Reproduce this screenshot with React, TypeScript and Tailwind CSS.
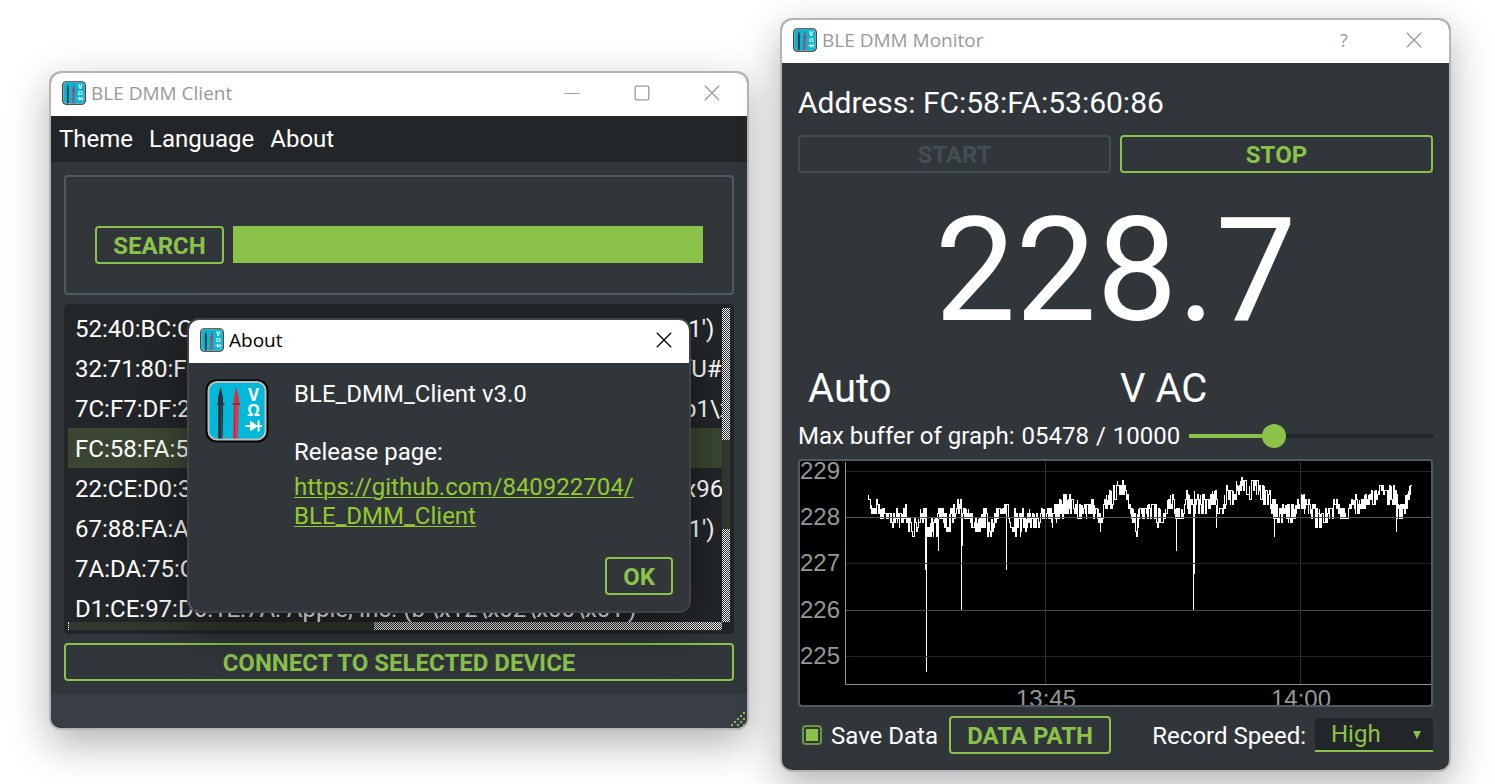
import { useState, type ReactNode } from "react";

const SANS = "font-['Roboto',sans-serif]";
const TITLE_FONT = "font-['Open_Sans',sans-serif]";

function AppIcon({ className }: { className: string }) {
  return (
    <svg viewBox="0 0 64 64" className={className} aria-hidden="true">
      <rect x="0.5" y="0.5" width="63" height="63" rx="11" fill="#050505" />
      <rect x="3.5" y="3" width="57" height="57.5" rx="8.5" fill="#00b8d9" stroke="#bfbdb9" strokeWidth="2" />
      <path d="M15 9 L16 9 L18 19 V24 H13 V19 Z" fill="#2b2f38" />
      <path d="M12 24 H19.4 V25.6 H18.2 L17.6 59.5 H13.2 L13.2 25.6 H12 Z" fill="#2b2f38" />
      <path d="M16.4 27 V59" stroke="#4b505a" strokeWidth="0.8" />
      <path d="M30.8 9 L31.8 9 L33.8 19 V24 H28.8 V19 Z" fill="#d9303f" />
      <path d="M27.6 24 H35 V25.6 H33.8 L32.6 59.5 H28 L28.8 25.6 H27.6 Z" fill="#e8334a" />
      <path d="M29.8 27 L29.4 59" stroke="#a82635" strokeWidth="0.8" />
      <path d="M27.6 25 H35" stroke="#8c1f2c" strokeWidth="1.4" />
      <text x="48.5" y="21.5" textAnchor="middle" fontFamily="Open Sans, sans-serif" fontWeight="700" fontSize="17" fill="#fff">
        V
      </text>
      <text x="48.5" y="37" textAnchor="middle" fontFamily="Open Sans, sans-serif" fontWeight="700" fontSize="16" fill="#fff">
        Ω
      </text>
      <path d="M40.5 47 H57" stroke="#fff" strokeWidth="1.8" />
      <path d="M45 41.4 L53 47 L45 52.6 Z" fill="#fff" />
      <path d="M53.6 41.4 V52.6" stroke="#fff" strokeWidth="2" />
    </svg>
  );
}

function CloseGlyph() {
  return (
    <svg viewBox="0 0 16 16" className="size-4" aria-hidden="true">
      <path d="M0.8 0.8 L15.2 15.2 M15.2 0.8 L0.8 15.2" stroke="currentColor" strokeWidth="1.3" fill="none" />
    </svg>
  );
}

function TitleBar({ title, active, children }: { title: string; active?: boolean; children: ReactNode }) {
  return (
    <header
      className={`flex h-[43px] items-center bg-white pb-[3px] ${TITLE_FONT} ${active ? "text-black" : "text-[#999999]"}`}
    >
      <AppIcon className="ml-[11px] size-6 shrink-0" />
      <h1 className="ml-[5px] flex-1 text-[19px] leading-6 font-normal">{title}</h1>
      {children}
    </header>
  );
}

function OutlineButton({ children, className = "", disabled }: { children: ReactNode; className?: string; disabled?: boolean }) {
  return (
    <button
      type="button"
      disabled={disabled}
      className={`h-[38px] rounded border-2 px-4 pt-0.5 text-2xl leading-none font-bold whitespace-nowrap ${
        disabled ? "border-[#434e54] text-[#434e54]" : "border-[#8bc34a] text-[#8bc34a]"
      } ${className}`}
    >
      {children}
    </button>
  );
}

const DEVICES = [
  "52:40:BC:C8:5B:E1: Apple, Inc. (b'\\x10\\x05\\x0b\\x1c&H\\x11')",
  "32:71:80:F2:4A:0D: Apple, Inc. (b'\\x10\\x06\\x1d\\x07tr\\x1efU#\\x04')",
  "7C:F7:DF:20:91:3E: Apple, Inc. (b'\\x10\\x05\\x02G\\x18\\x0cb1\\x8e')",
  "FC:58:FA:53:60:86: BDM",
  "22:CE:D0:3B:7F:A5: Microsoft (b'\\x01\\t \\x02\\x03B7t\\x0e\\x96\\x1b')",
  "67:88:FA:A4:0C:D9: Apple, Inc. (b'\\x10\\x05\\x02\\x18&H\\x01')",
  "7A:DA:75:C1:3D:62: None",
  "D1:CE:97:D6:1E:7A: Apple, Inc. (b'\\x12\\x02\\x00\\x01')",
];

const DITHER = "bg-[repeating-conic-gradient(#ffffff_0_25%,#232629_0_50%)] bg-[length:2px_2px]";

function DeviceList() {
  const [selected, setSelected] = useState(3);
  return (
    <div className="mt-[9px] grid grid-cols-[minmax(0,1fr)_8px] grid-rows-[314px_8px] rounded bg-[#232629] p-1">
      <ul className="overflow-hidden">
        {DEVICES.map((device, i) => (
          <li key={device}>
            <button
              type="button"
              onClick={() => setSelected(i)}
              className={`block h-10 w-full overflow-hidden pl-[7px] text-left text-2xl leading-[42px] whitespace-nowrap text-white ${
                i === selected ? "bg-[#3b4632]" : ""
              }`}
            >
              {device}
            </button>
          </li>
        ))}
      </ul>
      <div className="flex flex-col">
        <div className={`h-[132px] ${DITHER}`} />
        <div className="h-[89px] bg-[#31382e]" />
        <div className={`flex-1 ${DITHER}`} />
      </div>
      <div className="flex">
        <div className="w-[306px] border-l border-dotted border-white bg-[#31382e]" />
        <div className={`flex-1 ${DITHER}`} />
      </div>
    </div>
  );
}

function ResizeGrip() {
  const dots = [
    [12, 0], [9, 3], [6, 6], [3, 9], [0, 12],
    [12, 6], [9, 9], [6, 12], [12, 12],
  ];
  return (
    <svg viewBox="0 0 14 14" className="size-3.5" aria-hidden="true">
      {dots.map(([x, y]) => (
        <rect key={`${x}-${y}`} x={x} y={y} width="2" height="2" fill="#8bc34a" />
      ))}
    </svg>
  );
}

function ClientWindow() {
  return (
    <section className="absolute top-[71px] left-[49px] w-[700px] overflow-hidden rounded-xl border-2 border-[#b5b5b5] bg-[#31363b] shadow-[0_14px_40px_rgba(0,0,0,0.3)]">
      <TitleBar title="BLE DMM Client">
        <button type="button" aria-label="Minimize" className="flex w-[70px] justify-center">
          <svg viewBox="0 0 16 16" className="size-4" aria-hidden="true">
            <path d="M0.5 8.5 H15.5" stroke="currentColor" />
          </svg>
        </button>
        <button type="button" aria-label="Maximize" className="flex w-[70px] justify-center">
          <svg viewBox="0 0 16 16" className="size-4" aria-hidden="true">
            <rect x="1.2" y="1.2" width="13.6" height="13.6" rx="1" fill="none" stroke="currentColor" strokeWidth="1.3" />
          </svg>
        </button>
        <button type="button" aria-label="Close" className="flex w-[70px] justify-center">
          <CloseGlyph />
        </button>
      </TitleBar>
      <nav className="flex h-[46px] items-center gap-4 bg-[#232629] px-2 text-2xl text-white">
        <button type="button">Theme</button>
        <button type="button">Language</button>
        <button type="button">About</button>
      </nav>
      <main className="flex flex-col p-[13px]">
        <div className="flex h-[120px] items-start gap-[9px] rounded border-2 border-[#4f5b62] px-[29px] pt-[49px]">
          <OutlineButton className="min-w-[129px]">SEARCH</OutlineButton>
          <div
            role="progressbar"
            aria-label="Search progress"
            aria-valuenow={100}
            aria-valuemin={0}
            aria-valuemax={100}
            className="h-[37px] flex-1 bg-[#8bc34a]"
          />
        </div>
        <DeviceList />
        <OutlineButton className="mt-[9px]">CONNECT TO SELECTED DEVICE</OutlineButton>
      </main>
      <footer className="flex h-[34px] items-end justify-end bg-[#393d45] pr-[2px] pb-[2px]">
        <ResizeGrip />
      </footer>
    </section>
  );
}

function AboutDialog() {
  return (
    <section
      role="dialog"
      aria-label="About"
      className="absolute top-[318px] left-[187px] w-[504px] overflow-hidden rounded-xl border-2 border-[#414345] bg-[#31363b] bg-clip-padding text-white shadow-[0_16px_44px_rgba(0,0,0,0.42)]"
    >
      <TitleBar title="About" active>
        <button type="button" aria-label="Close" className="mr-[17px]">
          <CloseGlyph />
        </button>
      </TitleBar>
      <div className="flex gap-[25px] px-4 pt-4">
        <AppIcon className="size-16 shrink-0" />
        <div className="flex-1 pt-px text-2xl leading-[29px]">
          <p>BLE_DMM_Client v3.0</p>
          <p className="mt-[29px]">Release page:</p>
          <a href="https://github.com/840922704/BLE_DMM_Client" className="mt-1.5 block text-[#93ca2f] underline decoration-1 underline-offset-2">
            https://github.com/840922704/
            <br />
            BLE_DMM_Client
          </a>
        </div>
      </div>
      <div className="flex justify-end px-4 pt-[26px] pb-4">
        <OutlineButton>OK</OutlineButton>
      </div>
    </section>
  );
}

// Signal envelope: [x, low, high], levels in tenths of a volt around 228 V.
const ENVELOPE: [number, number, number][] = [
  [68, 3, 5], [72, 1, 3], [76, 1, 4], [80, 0, 2], [88, 0, 2], [92, -2, 1], [96, 0, 2], [100, -2, 1],
  [105, 0, 3], [108, -3, 0], [115, -4, 0], [120, -1, 2], [125, 0, 2], [127, -4, -1], [136, -4, 0],
  [138, 0, 2], [142, 0, 2], [145, -3, 1], [150, -3, 2], [155, 0, 3], [160, 1, 5], [163, 0, 2],
  [167, 0, 2], [171, -2, 1], [174, -3, 0], [180, -3, 0], [183, -1, 3], [187, -4, 0], [193, -3, 0],
  [197, 0, 2], [207, 1, 3], [210, -2, 1], [214, -4, 1], [220, -4, 1], [227, -2, 2], [232, -2, 1],
  [237, -4, 1], [240, 0, 2], [250, 0, 2], [253, -3, 2], [257, 0, 4], [262, 0, 5], [267, 1, 5],
  [273, 1, 4], [280, 0, 3], [287, 0, 3], [290, 1, 4], [297, 0, 2], [300, -3, 1], [303, 0, 3],
  [307, 2, 5], [312, 2, 7], [318, 4, 8], [325, 5, 7], [328, 2, 4], [332, -1, 2], [336, -4, 0],
  [338, 0, 2], [345, 0, 2], [349, 1, 4], [355, -2, 3], [362, -1, 1], [367, 1, 4], [371, 2, 6],
  [376, -1, 2], [381, 0, 2], [387, 1, 6], [392, 1, 3], [395, 1, 4], [402, 1, 5], [408, 1, 4],
  [414, 3, 7], [417, 1, 3], [423, 1, 3], [425, 3, 7], [430, 3, 6], [437, 5, 8], [443, 6, 9],
  [450, 4, 7], [455, 6, 9], [460, 4, 7], [467, 3, 6], [472, 1, 5], [477, -1, 3], [483, 0, 3],
  [492, -1, 3], [497, 2, 4], [502, 2, 5], [507, 1, 4], [512, -1, 3], [520, -2, 2], [528, -1, 2],
  [533, 1, 4], [537, 2, 4], [540, 0, 2], [547, 0, 2], [552, 2, 5], [558, 1, 4], [567, 3, 5],
  [573, 3, 6], [580, 5, 7], [585, 3, 6], [595, 3, 7], [597, 0, 3], [603, 0, 3], [606, 2, 5],
  [609, 5, 7], [612, 7, 7],
];

const SPIKES: [number, number, number][] = [
  [125, -11, 2], [126, -33, 0], [138, -7, 0], [161, -20, 4], [162, -6, 0], [206, -11, 2],
  [376, -7, 2], [393, -20, 2], [394, -12, 6], [416, -2, 3], [474, -4, 3], [596, -3, 2],
];

const levelToY = (level: number) => Math.round(56.5 - level * 4.64) + 0.5;

function buildTrace() {
  let seed = 17;
  const random = () => {
    seed = (seed * 1103515245 + 12345) % 2147483648;
    return seed / 2147483648;
  };
  let path = "";
  let seg = 0;
  let up = true;
  for (let x = 68; x <= 611; x += 1) {
    while (seg < ENVELOPE.length - 2 && ENVELOPE[seg + 1][0] <= x) seg += 1;
    const [x0, lo0, hi0] = ENVELOPE[seg];
    const [x1, lo1, hi1] = ENVELOPE[seg + 1];
    const t = (x - x0) / (x1 - x0);
    const lo = lo0 + (lo1 - lo0) * t;
    const hi = hi0 + (hi1 - hi0) * t;
    const pick = () => {
      if (random() < 0.6) up = !up;
      const depth = random() * 0.45 - 0.12;
      return levelToY(Math.round(up ? hi - (hi - lo) * depth : lo + (hi - lo) * depth));
    };
    path += path ? `H${x + 0.5}V${pick()}` : `M${x + 0.5} ${levelToY(5)}V${pick()}`;
    if (random() < 0.6) path += `V${pick()}`;
  }
  const spikes = SPIKES.map(([x, lo, hi]) => `M${x + 0.5} ${levelToY(hi)}V${levelToY(lo)}`).join("");
  return path + spikes;
}

const TRACE = buildTrace();

const Y_TICKS = [
  { label: "229", y: 10.5, color: "#262626" },
  { label: "228", y: 56.5, color: "#555555" },
  { label: "227", y: 102.5, color: "#262626" },
  { label: "226", y: 149.5, color: "#4a4a4a" },
  { label: "225", y: 195.5, color: "#262626" },
];
const X_TICKS = [
  { label: "13:45", x: 245.5 },
  { label: "14:00", x: 500.5 },
];

function VoltageChart() {
  return (
    <div className="mt-[7px] overflow-hidden rounded border-2 border-[#4f5b62] bg-black">
      <svg viewBox="0 0 631 244" className="block h-auto w-full" role="img" aria-label="Voltage over time">
        <path d={TRACE} fill="none" stroke="#ffffff" strokeWidth="1" shapeRendering="crispEdges" />
        {Y_TICKS.map((tick) => (
          <g key={tick.label}>
            <path d={`M46 ${tick.y} H631`} stroke={tick.color} />
            <text x="0" y={tick.y + 7.5} fontFamily="Liberation Sans, sans-serif" fontSize="24" fill="#969696">
              {tick.label}
            </text>
          </g>
        ))}
        {X_TICKS.map((tick) => (
          <g key={tick.label}>
            <path d={`M${tick.x} 1 V223`} stroke="#303030" />
            <text x={tick.x + 0.5} y="246" textAnchor="middle" fontFamily="Liberation Sans, sans-serif" fontSize="24" fill="#969696">
              {tick.label}
            </text>
          </g>
        ))}
        <path d="M45.5 1 V223.5 H631" fill="none" stroke="#969696" />
      </svg>
    </div>
  );
}

function BufferSlider() {
  const [value, setValue] = useState(33);
  return (
    <input
      id="buffer"
      type="range"
      min={0}
      max={100}
      value={value}
      onChange={(e) => setValue(Number(e.target.value))}
      style={{
        backgroundImage: `linear-gradient(to right, #8bc34a ${value}%, #232629 ${value}%)`,
      }}
      className="ml-0.5 h-1 min-w-0 flex-1 appearance-none [&::-webkit-slider-thumb]:size-6 [&::-webkit-slider-thumb]:appearance-none [&::-webkit-slider-thumb]:rounded-full [&::-webkit-slider-thumb]:bg-[#8bc34a]"
    />
  );
}

function MonitorWindow() {
  const [save, setSave] = useState(true);
  return (
    <section className="absolute top-[18px] left-[780px] w-[671px] overflow-hidden rounded-xl border-2 border-[#b5b5b5] bg-[#31363b] shadow-[0_14px_40px_rgba(0,0,0,0.3)]">
      <TitleBar title="BLE DMM Monitor">
        <button type="button" aria-label="Help" className="w-[70px] text-center text-lg">
          ?
        </button>
        <button type="button" aria-label="Close" className="flex w-[70px] justify-center">
          <CloseGlyph />
        </button>
      </TitleBar>
      <main className="flex flex-col px-4 pt-5 pb-4 text-2xl text-white">
        <p className="text-[30px] leading-10">Address: FC:58:FA:53:60:86</p>
        <div className="mt-3 grid grid-cols-2 gap-[9px]">
          <OutlineButton disabled>START</OutlineButton>
          <OutlineButton>STOP</OutlineButton>
        </div>
        <output className="block pt-px text-center text-[144px] leading-[194px]">228.7</output>
        <div className="grid grid-cols-2 gap-[9px] text-[40px] leading-[42px]">
          <span className="pl-[10px]">Auto</span>
          <span>V AC</span>
        </div>
        <div className="mt-[10px] flex h-8 items-center gap-[7px] whitespace-nowrap">
          <label htmlFor="buffer">Max buffer of graph:</label>
          <span>05478</span>
          <span>/</span>
          <span>10000</span>
          <BufferSlider />
        </div>
        <VoltageChart />
        <div className="mt-[9px] grid grid-cols-2 gap-[9px] whitespace-nowrap">
          <div className="flex items-center">
            <label className="flex flex-1 items-center gap-[9px] pl-1">
              <input
                type="checkbox"
                checked={save}
                onChange={(e) => setSave(e.target.checked)}
                className="size-5 appearance-none rounded-sm border-2 border-[#6d963f] bg-clip-content p-0.5 checked:bg-[#8bc34a]"
              />
              <span className="pt-0.5">Save Data</span>
            </label>
            <OutlineButton>DATA PATH</OutlineButton>
          </div>
          <div className="flex items-center justify-end gap-[9px]">
            <label htmlFor="speed" className="pt-0.5">Record Speed:</label>
            <div className="relative">
              <select
                id="speed"
                defaultValue="High"
                className="block h-[34px] w-[118px] appearance-none rounded-t border-b-2 border-[#8bc34a] bg-[#232629] pl-4 text-2xl leading-8 text-[#8bc34a]"
              >
                <option>High</option>
                <option>Medium</option>
                <option>Low</option>
              </select>
              <svg viewBox="0 0 8 8" className="pointer-events-none absolute top-[13px] right-3 size-2" aria-hidden="true">
                <path d="M0 0 H8 L4 8 Z" fill="#8bc34a" />
              </svg>
            </div>
          </div>
        </div>
      </main>
    </section>
  );
}

export default function App() {
  return (
    <div className={`relative min-h-screen overflow-hidden bg-white ${SANS}`}>
      <ClientWindow />
      <AboutDialog />
      <MonitorWindow />
    </div>
  );
}
